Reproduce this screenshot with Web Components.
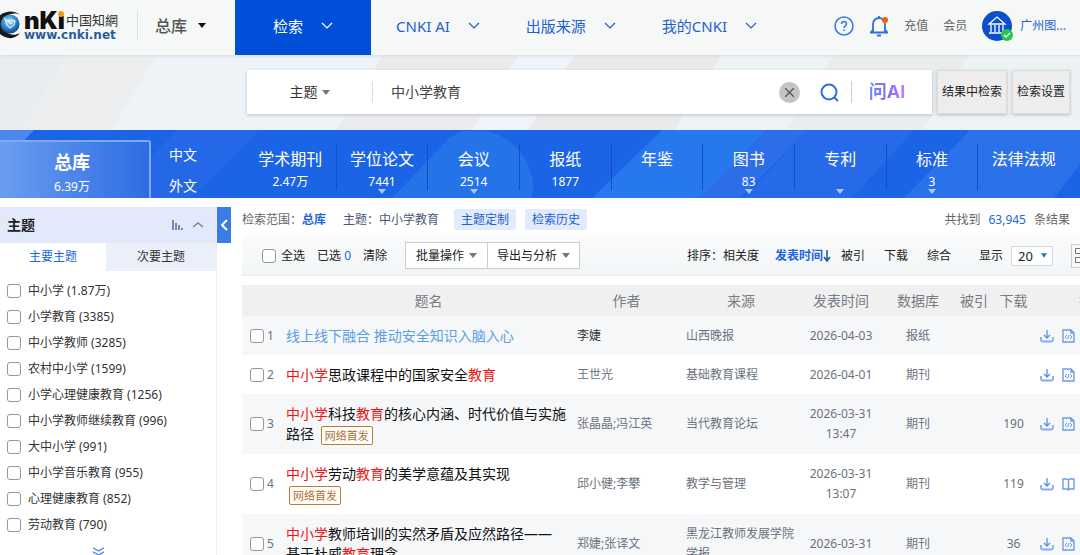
<!DOCTYPE html>
<html lang="zh-CN">
<head>
<meta charset="utf-8">
<meta name="viewport" content="width=device-width, initial-scale=1">
<title>检索-中国知网</title>
<style>
  body {
    margin: 0;
    height: 100vh;
    overflow: hidden;
    background: #fff;
    color: #333;
    font: 12px/20px "Noto Sans", "Noto Sans CJK SC", sans-serif;
  }
  .content {
    display: grid;
    grid-template-columns: 231px minmax(0, 1fr);
    column-gap: 11px;
    padding-top: 9px;
  }
</style>
</head>
<body>
<site-header>
  <nav-item active>检索</nav-item>
  <nav-item>CNKI AI</nav-item>
  <nav-item>出版来源</nav-item>
  <nav-item>我的CNKI</nav-item>
</site-header>
<search-bar value="中小学教育"></search-bar>
<db-nav>
  <db-item count="2.47万">学术期刊</db-item>
  <db-item count="7441" more>学位论文</db-item>
  <db-item count="2514" more>会议</db-item>
  <db-item count="1877">报纸</db-item>
  <db-item>年鉴</db-item>
  <db-item count="83" more>图书</db-item>
  <db-item more>专利</db-item>
  <db-item count="3" more>标准</db-item>
  <db-item>法律法规</db-item>
</db-nav>
<div class="content">
  <topic-filter></topic-filter>
  <main>
    <result-summary></result-summary>
    <result-toolbar></result-toolbar>
    <result-table></result-table>
  </main>
</div>

<script>
const BASE = `
  * { box-sizing: border-box; }
  a { color: inherit; text-decoration: none; }
  button, select, input { font: inherit; color: inherit; margin: 0; }
  button { padding: 0; border: 0; background: none; cursor: pointer; }
  svg { display: block; flex: none; }
  input[type=checkbox] {
    appearance: none;
    flex: none;
    width: 14px;
    height: 14px;
    border: 1px solid #96969b;
    border-radius: 3px;
    background: #fff;
  }
  input[type=checkbox]:checked { background: #1b66e6; }
`;

const CARET = '<svg width="8" height="5" viewBox="0 0 8 5"><path d="M0 0h8L4 5z" fill="currentColor"/></svg>';
const CHEVRON = '<svg width="12" height="7" viewBox="0 0 12 7" fill="none" stroke="currentColor" stroke-width="1.2"><path d="M1 1l5 5 5-5"/></svg>';

class NavItem extends HTMLElement {
  constructor() {
    super();
    this.attachShadow({ mode: 'open' });
    this.shadowRoot.innerHTML = `
      <style>
        ${BASE}
        :host { display: block; color: #1f5fd0; font-size: 15px; }
        a { display: flex; align-items: center; gap: 18px; height: 100%; padding: 0 23px 4px; }
        :host([active]) { background: #004fd9; color: #fff; margin-right: 2px; }
        :host([active]) a { padding: 0 38px 4px; }
      </style>
      <a href="#"><slot></slot>${CHEVRON}</a>
    `;
  }
}
customElements.define('nav-item', NavItem);

class SiteHeader extends HTMLElement {
  constructor() {
    super();
    this.attachShadow({ mode: 'open' });
    this.shadowRoot.innerHTML = `
      <style>
        ${BASE}
        :host {
          position: relative;
          display: flex;
          height: 55px;
          background: #f6f7f7;
          box-shadow: 0 1px 3px #d5dce2;
        }
        .brand { display: flex; align-items: center; width: 235px; }
        .logo { display: flex; width: 138px; height: 30px; margin-top: -6px; border-right: 1px solid #dde3ec; }
        .words { display: grid; grid-template: 19px 12px / auto 1fr; margin-left: 2px; }
        .mark { position: relative; color: #111; font: 900 24px/22px Inter, sans-serif; }
        .dot { position: absolute; right: 1px; top: 1px; width: 6px; height: 6px; border-radius: 50%; background: #f39a1e; }
        .cn { padding-left: 1px; color: #333; font: 13px/20px "Noto Sans CJK TC", sans-serif; white-space: nowrap; }
        .site { grid-column: 1 / 3; color: #2c5c9e; font: bold 12px/12px "DejaVu Sans", sans-serif; }
        .total { display: flex; align-items: center; gap: 11px; padding-left: 17px; color: #555; font-size: 16px; font-weight: 500; margin-top: -4px; }
        .total svg { color: #111; }
        nav { display: flex; flex: 1; }
        .tools { display: flex; align-items: center; padding-right: 14px; color: #666; margin-top: -3px; }
        .tools > * + * { margin-left: 15px; }
        .user { display: flex; align-items: center; gap: 6px; color: #1f5fd0; }
      </style>
      <div class="brand">
        <a class="logo" href="#" aria-label="CNKI">
          <svg width="22" height="30" viewBox="0 0 22 30">
            <defs><radialGradient id="globe" cx=".45" cy=".35" r=".7"><stop offset="0" stop-color="#b9e6fa"/><stop offset=".45" stop-color="#3d91d3"/><stop offset="1" stop-color="#083a82"/></radialGradient></defs>
            <path d="M20 5C15 0 5 0-2 7v15c7 8 17 8 22 1-7 4-16 1-17-8S13 1 20 5z" fill="#191919"/>
            <circle cx="10" cy="14" r="9.500" fill="url(#globe)"/>
            <path d="M5 9l4 3 2-2 4 1-1 4-4 3-3-3zM8 10l3 4 3-4" fill="none" stroke="#d8f3ff" stroke-width="1.200"/>
          </svg>
          <span class="words">
            <span class="mark">nKı<i class="dot"></i></span>
            <span class="cn">中国知網</span>
            <span class="site">www.cnki.net</span>
          </span>
        </a>
        <button class="total">总库 ${CARET}</button>
      </div>
      <nav><slot></slot></nav>
      <div class="tools">
        <button aria-label="帮助">
          <svg width="20" height="20" viewBox="0 0 20 20" fill="none" stroke="#3f7be0" stroke-width="1.600">
            <circle cx="10" cy="10" r="9"/>
            <path d="M7.500 8c0-3.400 5-3.400 5 0 0 2-2.500 1.800-2.500 4"/><path d="M10 13.500v1.600" stroke-width="1.800"/>
          </svg>
        </button>
        <button aria-label="消息">
          <svg width="20" height="22" viewBox="0 0 20 22" fill="none" stroke="#2f6fdf" stroke-width="1.800">
            <path d="M1 17.500h18M4 17V9a6 6 0 0 1 12 0v8M2 17.500l2-3M18 17.500l-2-3M10 3V1"/>
            <path d="M8 20.500h4" stroke-width="2"/>
            <circle cx="16" cy="5" r="3" fill="#ff5b00" stroke="none"/>
          </svg>
        </button>
        <a href="#">充值</a>
        <a href="#">会员</a>
        <a class="user" href="#">
          <svg width="32" height="32" viewBox="0 0 32 32">
            <circle cx="15" cy="16" r="15" fill="#0b4fc9"/>
            <path d="M7 14l8-7 8 7zM9 15v7M13 15v7M17 15v7M21 15v7M7 23h16" fill="none" stroke="#fff" stroke-width="1.300"/>
            <circle cx="25" cy="25" r="6" fill="#22c94b"/>
            <path d="M22 25l2 2 4-4" fill="none" stroke="#fff" stroke-width="1.400"/>
          </svg>
          <span>广州图...</span>
        </a>
      </div>
    `;
  }
}
customElements.define('site-header', SiteHeader);

class SearchBar extends HTMLElement {
  constructor() {
    super();
    this.attachShadow({ mode: 'open' });
    this.shadowRoot.innerHTML = `
      <style>
        ${BASE}
        :host {
          display: block;
          padding: 15px 10px 16px 247px;
          background: linear-gradient(122deg, #e9edef 0 6%, #edeeef 6% 14%, #eef3f8 14% 34%, #ebebed 34% 46%, #eef4f9 46% 51%, #ebeaeb 51% 64%, #edf2f5 64% 74%, #e9edee 74% 86%, #edf2f5 86%);
        }
        form { display: flex; gap: 5px; height: 44px; }
        .box { display: flex; flex: 1; align-items: center; min-width: 0; background: #fff; box-shadow: 0 1px 3px #b9bfc5; }
        .field { display: flex; align-items: center; justify-content: center; gap: 4px; width: 126px; height: 20px; border-right: 1px solid #ddd; font-size: 14px; color: #333; }
        select { appearance: none; border: 0; background: none; padding: 0; outline: 0; }
        .field svg { color: #777; }
        input { flex: 1; min-width: 0; border: 0; outline: 0; padding: 0 18px; font-size: 14px; color: #444; background: none; }
        .clear { display: grid; place-items: center; width: 21px; height: 21px; border-radius: 50%; background: #c4c4c4; }
        .go { margin: 0 12px 0 20px; }
        .ask { height: 22px; width: 81px; border-left: 1px solid #ccc; padding-right: 10px; font: 700 18px/22px Inter, "Noto Sans CJK SC", sans-serif; }
        .ask span { background: linear-gradient(90deg, #6f8cf5, #7d6df2 50%, #c77bf7); background-clip: text; color: transparent; }
        .side { padding: 0 4px; background: #ededee; border: 1px solid #dcdcdc; box-shadow: 0 1px 3px #bbb; color: #222; white-space: nowrap; }
      </style>
      <form>
        <div class="box">
          <label class="field"><select aria-label="检索字段"><option>主题</option></select>${CARET}</label>
          <input type="text" aria-label="检索词">
          <button class="clear" type="button" aria-label="清空">
            <svg width="9" height="9" viewBox="0 0 9 9" stroke="#555" stroke-width="1.300"><path d="M0 0l9 9M9 0L0 9"/></svg>
          </button>
          <button class="go" type="button" aria-label="检索">
            <svg width="19" height="19" viewBox="0 0 19 19" fill="none" stroke="#2f6fe4" stroke-width="2"><circle cx="9" cy="9" r="7.500"/><path d="M14 14l4 4"/></svg>
          </button>
          <button class="ask" type="button"><span>问AI</span></button>
        </div>
        <button class="side" type="button">结果中检索</button>
        <button class="side" type="button">检索设置</button>
      </form>
    `;
  }

  connectedCallback() {
    const input = this.shadowRoot.querySelector('input');
    input.value = this.getAttribute('value') || '';
    this.shadowRoot.querySelector('.clear').addEventListener('click', () => {
      input.value = '';
      input.focus();
    });
  }
}
customElements.define('search-bar', SearchBar);

class DbItem extends HTMLElement {
  constructor() {
    super();
    this.attachShadow({ mode: 'open' });
  }

  connectedCallback() {
    this.shadowRoot.innerHTML = `
      <style>
        ${BASE}
        :host { display: block; flex: 1 1 0; min-width: 0; padding: 14px 0 8px; color: #fff; }
        a { display: grid; grid-template-rows: 31px 14px 5px; justify-items: center; height: 46px; border-right: 1px solid #1450bd; }
        :host(:last-of-type) a { border-right-color: transparent; }
        .name { font-size: 16px; line-height: 31px; white-space: nowrap; }
        .count { line-height: 14px; }
        svg { color: #a9c8fa; }
      </style>
      <a href="#">
        <span class="name"><slot></slot></span>
        <span class="count">${this.getAttribute('count') || ''}</span>
        ${this.hasAttribute('more') ? CARET : ''}
      </a>
    `;
  }
}
customElements.define('db-item', DbItem);

class DbNav extends HTMLElement {
  constructor() {
    super();
    this.attachShadow({ mode: 'open' });
    this.shadowRoot.innerHTML = `
      <style>
        ${BASE}
        :host { position: relative; display: flex; height: 68px; padding-right: 10px; background: #1b64e6; color: #fff; overflow: hidden; }
        .backdrop { position: absolute; inset: 0; width: 100%; height: 100%; }
        .total {
          position: relative;
          width: 151px;
          margin-top: 10px;
          border: 1px solid #7faaf2;
          border-width: 2px 2px 0 0;
          border-top-right-radius: 3px;
          background: linear-gradient(90deg, #6c9df0, #2c6de4);
          display: grid;
          grid-template-rows: 40px 20px;
          padding-right: 5px;
          text-align: center;
        }
        .total b { font-size: 18px; line-height: 40px; }
        .total span { line-height: 10px; }
        .lang { position: relative; display: grid; grid-template-rows: 31px 31px; width: 94px; padding: 10px 0 0 18px; font-size: 14px; line-height: 30px; }
        .list { position: relative; display: flex; flex: 1; min-width: 0; }
      </style>
      <svg class="backdrop" viewBox="0 0 1080 68" preserveAspectRatio="none">
        <path d="M0 0h34L0 36z" fill="#4d88ee"/>
        <path d="M178 0h82l-70 68h-80z" fill="#2468e8"/>
        <path d="M392 68L440 18C448 8 456 3 466 1c32-4 52 14 60 30s9 28 5 37z" fill="#2573e9"/>
        <path d="M592 68L662 0h105l-66 68z" fill="#2678ec"/>
        <path d="M700 68l68-68h40l-68 68z" fill="#2c6de8"/>
        <path d="M808 0h106l-62 68h-108z" fill="#276ae9"/>
        <path d="M970 0h110v34l-26 34H904z" fill="#2b71ea"/>
      </svg>
      <a class="total" href="#"><b>总库</b><span>6.39万</span></a>
      <div class="lang"><a href="#">中文</a><a href="#">外文</a></div>
      <div class="list"><slot></slot></div>
    `;
  }
}
customElements.define('db-nav', DbNav);

const TOPICS = [
  ['中小学', '1.87万'],
  ['小学教育', '3385'],
  ['中小学教师', '3285'],
  ['农村中小学', '1599'],
  ['小学心理健康教育', '1256'],
  ['中小学教师继续教育', '996'],
  ['大中小学', '991'],
  ['中小学音乐教育', '955'],
  ['心理健康教育', '852'],
  ['劳动教育', '790']
];

class TopicFilter extends HTMLElement {
  constructor() {
    super();
    this.attachShadow({ mode: 'open' });
    this.shadowRoot.innerHTML = `
      <style>
        ${BASE}
        :host { display: flex; align-items: flex-start; }
        .panel { flex: 1; border-right: 1px solid #e8ecf5; min-height: 100vh; }
        header { display: flex; align-items: center; gap: 9px; height: 36px; padding: 0 13px 0 7px; background: #e2e9fa; }
        h2 { flex: 1; margin: 0; font-size: 14px; color: #222; }
        header svg { color: #7789b0; }
        .tabs { display: grid; grid-template-columns: 106px 1fr; height: 28px; background: #ebeffa; }
        .tabs [aria-selected=true] { background: #fff; color: #1f66e0; }
        ul { list-style: none; margin: 0; padding: 7px 0 0 7px; }
        label { display: flex; align-items: center; gap: 7px; height: 26px; }
        .more { display: block; margin: 9px auto 0; padding-right: 20px; }
        .toggle { display: grid; place-items: center; width: 14px; height: 36px; background: #3a7be8; }
      </style>
      <section class="panel">
        <header>
          <h2>主题</h2>
          <svg width="12" height="10" viewBox="0 0 12 10" fill="currentColor"><path d="M0 0h2v10H0zM3 3h2v7H3zM6 5h2v5H6zM9 8h2v2H9z"/></svg>
          <svg width="10" height="6" viewBox="0 0 10 6" fill="none" stroke="currentColor" stroke-width="1.500"><path d="M0 5l5-4 5 4"/></svg>
        </header>
        <div class="tabs" role="tablist">
          <button role="tab" aria-selected="true">主要主题</button>
          <button role="tab" aria-selected="false">次要主题</button>
        </div>
        <ul>${TOPICS.map(([name, count]) => `<li><label><input type="checkbox"><span>${name} (${count})</span></label></li>`).join('')}</ul>
        <button class="more" aria-label="更多">
          <svg width="11" height="9" viewBox="0 0 11 9" fill="none" stroke="#5c93f0" stroke-width="1.500"><path d="M0 1l5.500 3L11 1M0 5l5.500 3L11 5"/></svg>
        </button>
      </section>
      <button class="toggle" aria-label="收起">
        <svg width="7" height="12" viewBox="0 0 7 12" fill="none" stroke="#fff" stroke-width="2"><path d="M6 1L1 6l5 5"/></svg>
      </button>
    `;
  }
}
customElements.define('topic-filter', TopicFilter);

class ResultSummary extends HTMLElement {
  constructor() {
    super();
    this.attachShadow({ mode: 'open' });
    this.shadowRoot.innerHTML = `
      <style>
        ${BASE}
        :host { display: flex; align-items: center; height: 25px; margin-bottom: 4px; padding-right: 10px; color: #666; white-space: nowrap; }
        b, em { color: #1f66e0; font-style: normal; }
        .query { margin: 0 15px 0 17px; color: #4a5878; }
        button { width: 62px; height: 21px; margin-right: 9px; border-radius: 2px; background: #e2ebfc; color: #1f5fd0; }
        .total { margin-left: auto; }
        em { margin: 0 8px; }
      </style>
      <span>检索范围：</span><b>总库</b>
      <span class="query">主题：中小学教育</span>
      <button>主题定制</button>
      <button>检索历史</button>
      <span class="total">共找到<em>63,945</em>条结果</span>
    `;
  }
}
customElements.define('result-summary', ResultSummary);

class ResultToolbar extends HTMLElement {
  constructor() {
    super();
    this.attachShadow({ mode: 'open' });
    this.shadowRoot.innerHTML = `
      <style>
        ${BASE}
        :host {
          display: flex;
          align-items: center;
          height: 39px;
          margin-bottom: 9px;
          padding-left: 20px;
          background: linear-gradient(#fafbfb, #f2f5f7);
          border-bottom: 1px solid #e9edf0;
          color: #222;
          white-space: nowrap;
          overflow: hidden;
        }
        label { display: flex; align-items: center; gap: 5px; }
        .picked { margin: 0 12px; }
        .picked i { color: #1f66e0; font-style: normal; }
        .group { display: flex; margin-left: 18px; }
        .group button { display: flex; align-items: center; gap: 5px; height: 27px; padding: 0 10px; border: 1px solid #ccc; background: #fff; }
        .group button + button { margin-left: -1px; padding: 0 9px; }
        .group svg { color: #777; }
        .sort { display: flex; gap: 19px; margin-left: auto; }
        .sort .on { display: flex; align-items: center; margin: 0 -9px 0 -3px; color: #1f66e0; font-weight: 700; }
        .size { gap: 8px; margin-left: 28px; }
        .pick { display: flex; align-items: center; width: 42px; height: 20px; padding: 0 5px 0 6px; border: 1px solid #d5dae0; background: #fff; }
        select { appearance: none; flex: 1; min-width: 0; height: 18px; border: 0; padding: 0; background: none; outline: 0; font-size: 13px; line-height: 18px; }
        .pick svg { color: #2b69d6; }
        .view { width: 24px; height: 24px; margin: 0 -15px 0 18px; border: 1px solid #ccc; background: #f8f8f8; }
        .view svg { margin-left: 3px; }
      </style>
      <label><input type="checkbox"><span>全选</span></label>
      <span class="picked">已选 <i>0</i></span>
      <button>清除</button>
      <div class="group">
        <button>批量操作 ${CARET}</button>
        <button>导出与分析 ${CARET}</button>
      </div>
      <div class="sort">
        <span>排序：<button>相关度</button></span>
        <button class="on">发表时间
          <svg width="8" height="12" viewBox="0 0 8 12" fill="none" stroke="#1e5099" stroke-width="1.500"><path d="M4 0v11M1 7l3 4 3-4"/></svg>
        </button>
        <button>被引</button>
        <button>下载</button>
        <button>综合</button>
      </div>
      <label class="size">显示
        <span class="pick"><select><option>20</option><option>50</option></select><svg width="6" height="5" viewBox="0 0 8 6"><path d="M0 0h8L4 6z" fill="currentColor"/></svg></span>
      </label>
      <button class="view" aria-label="详情">
        <svg width="16" height="16" viewBox="0 0 16 16" fill="none" stroke="#777"><path d="M.5.500h5v5h-5zM.5 9.500h5v5h-5zM8 1h8M8 5h8M8 10h8M8 14h8"/></svg>
      </button>
    `;
  }
}
customElements.define('result-toolbar', ResultToolbar);

const ROWS = [
  { title: '线上线下融合 推动安全知识入脑入心', visited: true, author: '李婕', source: '山西晚报', date: '2026-04-03', db: '报纸' },
  { title: '*中小学*思政课程中的国家安全*教育*', author: '王世光', source: '基础教育课程', date: '2026-04-01', db: '期刊' },
  { title: '*中小学*科技*教育*的核心内涵、时代价值与实施路径', early: true, author: '张晶晶;冯江英', source: '当代教育论坛', date: '2026-03-31 13:47', db: '期刊', downloads: 190 },
  { title: '*中小学*劳动*教育*的美学意蕴及其实现', early: true, author: '邱小健;李攀', source: '教学与管理', date: '2026-03-31 13:07', db: '期刊', downloads: 119, book: true },
  { title: '*中小学*教师培训的实然矛盾及应然路径——<br>基于杜威*教育*理念', author: '郑婕;张译文', source: '黑龙江教师发展学院学报', date: '2026-03-31', db: '期刊', downloads: 36 }
];

const DOWNLOAD = '<svg width="14" height="14" viewBox="0 0 14 14" fill="none" stroke="#5a8df0" stroke-width="1.300"><path d="M7 1v8M4 6l3 3 3-3"/><path d="M1 8v2.500c0 1.300.7 2 2 2h8c1.300 0 2-.7 2-2V8" stroke="#86abf4" stroke-width="1.800"/></svg>';
const HTML_READ = '<svg width="13" height="14" viewBox="0 0 13 14" fill="none" stroke="#6c9af0" stroke-width="1.400"><path d="M1 1h8l3 3v9H1zM9 1v3h3"/><path d="M5 6L3 8l2 2M8 6l2 2-2 2M7 6l-1 4" stroke-width="1"/></svg>';
const BOOK_READ = '<svg width="13" height="14" viewBox="0 0 13 14" fill="none" stroke="#6c9af0" stroke-width="1.400"><path d="M6.500 3L5 2H1v10h4l1.500 1L8 12h4V2H8zM6.500 3v10"/></svg>';

class ResultTable extends HTMLElement {
  constructor() {
    super();
    this.attachShadow({ mode: 'open' });
    this.shadowRoot.innerHTML = `
      <style>
        ${BASE}
        :host { display: block; overflow: hidden; color: #6b727c; }
        table { width: 100%; min-width: 911px; table-layout: fixed; border-collapse: collapse; }
        th { height: 31px; padding: 0; background: #f0f0f0; font-size: 14px; font-weight: 400; color: #777d85; }
        td { padding: 10px 0 9px; text-align: center; }
        tbody tr:nth-child(odd) { background: #f5f7f9; }
        .check { width: 44px; }
        .author { width: 111px; }
        .source { width: 118px; }
        .date { width: 82px; }
        .db { width: 72px; }
        .cited { width: 40px; }
        .count { width: 39px; }
        .ops { width: 120px; }
        td label { display: flex; align-items: center; gap: 3px; padding-left: 8px; }
        td.title { text-align: left; padding-right: 4px; color: #111; font-size: 14px; }
        td.author { text-align: left; padding-left: 6px; }
        td.source { text-align: left; padding-left: 4px; padding-right: 4px; }
        td.date { padding-left: 8px; padding-right: 8px; }
        .title mark { background: none; color: #f01414; }
        .visited { color: #5b9fe3; }
        .visited-row td.author { color: #333; }
        .early { display: inline-block; margin: 0 3px; padding: 0 3px; border: 1px solid #c07a2c; border-radius: 2px; font-size: 11px; line-height: 17px; color: #b06f1f; background: #fff; vertical-align: middle; }
        .actions { display: flex; gap: 8px; padding-left: 7px; }
      </style>
      <table>
        <thead>
          <tr>
            <th class="check"></th>
            <th>题名</th>
            <th class="author">作者</th>
            <th class="source">来源</th>
            <th class="date">发表时间</th>
            <th class="db">数据库</th>
            <th class="cited">被引</th>
            <th class="count">下载</th>
            <th class="ops">操作</th>
          </tr>
        </thead>
        <tbody></tbody>
      </table>
    `;
  }

  connectedCallback() {
    this.shadowRoot.querySelector('tbody').innerHTML = ROWS.map((row, i) => this.renderRow(row, i + 1)).join('');
  }

  renderRow(row, index) {
    const title = row.title.replace(/\*(.+?)\*/g, '<mark>$1</mark>');
    return `
      <tr class="${row.visited ? 'visited-row' : ''}">
        <td><label><input type="checkbox"><span>${index}</span></label></td>
        <td class="title"><a href="#" class="${row.visited ? 'visited' : ''}">${title}</a>${row.early ? ' <span class="early">网络首发</span>' : ''}</td>
        <td class="author">${row.author}</td>
        <td class="source">${row.source}</td>
        <td class="date">${row.date}</td>
        <td>${row.db}</td>
        <td></td>
        <td>${row.downloads || ''}</td>
        <td><div class="actions">
          <button aria-label="下载">${DOWNLOAD}</button>
          <button aria-label="阅读">${row.book ? BOOK_READ : HTML_READ}</button>
        </div></td>
      </tr>
    `;
  }
}
customElements.define('result-table', ResultTable);
</script>
</body>
</html>
